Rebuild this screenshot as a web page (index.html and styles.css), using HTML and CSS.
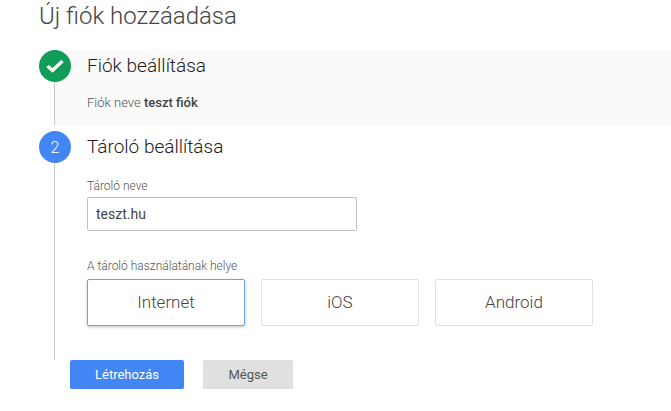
FILE: index.html
```html
<!DOCTYPE html>
<html lang="hu">

<head>
  <meta charset="UTF-8">
  <title>Új fiók hozzáadása</title>
  <link rel="stylesheet" href="styles.css">
</head>

<body>
  <h1 class="page_title">Új fiók hozzáadása</h1>

  <div class="step step_done">
    <div class="step_badge badge_green">
      <svg width="20" height="16" viewBox="0 0 20 16">
        <path d="M2.5 8 L7.5 12.5 L17.5 3" fill="none" stroke="#fff" stroke-width="3.4"/>
      </svg>
    </div>
    <h2 class="step_title">Fiók beállítása</h2>
    <p class="step_summary">Fiók neve <b>teszt fiók</b></p>
  </div>

  <div class="step step_active">
    <div class="step_badge badge_blue">2</div>
    <h2 class="step_title">Tároló beállítása</h2>

    <label class="field_label" for="input_name">Tároló neve</label>
    <input class="text_input" type="text" id="input_name" value="teszt.hu">

    <div class="field_label place_label">A tároló használatának helye</div>
    <div class="option_row">
      <div class="option option_selected">Internet</div>
      <div class="option">iOS</div>
      <div class="option">Android</div>
    </div>
  </div>

  <div class="button_row">
    <button class="btn btn_primary">Létrehozás</button>
    <button class="btn btn_cancel">Mégse</button>
  </div>
</body>

</html>
```

FILE: styles.css
```css
* {
    box-sizing: border-box;
    font-family: Roboto, Arial, sans-serif;
}

body {
    margin: 0;
    background-color: #fff;
    overflow: hidden;
}

.page_title {
    margin: 0 0 0 39px;
    height: 50px;
    padding-top: 1px;
    font-size: 24px;
    line-height: 30px;
    font-weight: 300;
    color: #444;
}

.step {
    position: relative;
    margin-left: 54px;
    padding-left: 32px;
    border-left: 1px solid #c8c8c8;
}

.step_done {
    height: 76px;
    background-color: #fafafa;
}

.step_active {
    height: 229px;
    margin-top: 5px;
}

.step_badge {
    position: absolute;
    top: 0;
    left: -16px;
    width: 32px;
    height: 32px;
    border-radius: 50%;
    display: flex;
    align-items: center;
    justify-content: center;
    color: #fff;
    font-size: 16px;
    font-weight: 300;
}

.badge_green {
    background-color: #0f9d58;
}

.badge_blue {
    background-color: #4285f4;
}

.step_title {
    margin: 0;
    padding-top: 5px;
    font-size: 19px;
    line-height: 22px;
    font-weight: 300;
    color: #212121;
}

.step_summary {
    margin: 18px 0 0 0;
    font-size: 13px;
    line-height: 16px;
    font-weight: 300;
    color: #555;
}

.step_summary b {
    font-weight: 500;
    color: #444;
}

.field_label {
    display: block;
    font-size: 12px;
    line-height: 14px;
    font-weight: 300;
    color: #555;
}

.step_active .field_label {
    margin-top: 21px;
}

.text_input {
    display: block;
    width: 270px;
    height: 34px;
    margin-top: 4px;
    padding: 0 8px;
    border: 1px solid #c0c0c0;
    border-radius: 2px;
    font-size: 14px;
    color: #444;
    outline: none;
}

.step_active .place_label {
    margin-top: 28px;
}

.option_row {
    display: flex;
    gap: 16px;
    margin-top: 6px;
}

.option {
    width: 158px;
    height: 47px;
    padding-bottom: 2px;
    display: flex;
    align-items: center;
    justify-content: center;
    border: 1px solid #e0e0e0;
    border-radius: 2px;
    font-size: 17px;
    font-weight: 300;
    color: #444;
}

.option_selected {
    border-color: #6fa0f5;
    box-shadow: 0 1px 3px rgba(0, 0, 0, 0.25);
}

.button_row {
    display: flex;
    gap: 19px;
    margin-left: 70px;
}

.btn {
    height: 29px;
    border: none;
    border-radius: 2px;
    font-size: 13px;
    box-shadow: 0 1px 1px rgba(0, 0, 0, 0.12);
}

.btn_primary {
    width: 114px;
    background-color: #4285f4;
    color: #fff;
}

.btn_cancel {
    width: 90px;
    background-color: #e0e0e0;
    color: #555;
}
```
